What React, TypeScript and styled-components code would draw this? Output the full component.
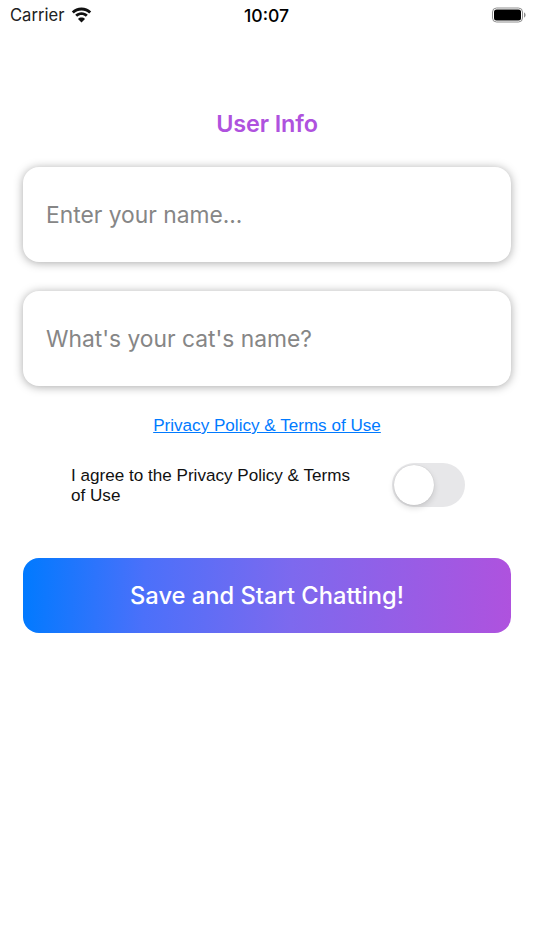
import React from 'react';
import styled, { createGlobalStyle } from 'styled-components';

const GlobalStyle = createGlobalStyle`
  html, body {
    margin: 0;
    padding: 0;
    background: #ffffff;
  }
  * {
    box-sizing: border-box;
  }
`;

const Screen = styled.div`
  width: 534px;
  height: 950px;
  overflow: hidden;
  background: #ffffff;
  font-family: Inter, "Liberation Sans", sans-serif;
`;

const StatusBar = styled.div`
  height: 30px;
  padding: 0 8px 0 10px;
  display: grid;
  grid-template-columns: 1fr auto 1fr;
  align-items: center;
  color: #000000;
`;

const StatusLeft = styled.div`
  display: flex;
  align-items: center;
  gap: 7px;
  font-size: 16.6px;
  color: #222222;
`;

const StatusTime = styled.div`
  margin-right: 3px;
  font-size: 17.6px;
  font-weight: 500;
`;

const StatusRight = styled.div`
  display: flex;
  justify-content: flex-end;
`;

const Content = styled.div`
  padding: 78px 23px 0;
  display: flex;
  flex-direction: column;
`;

const Title = styled.h1`
  margin: 0 0 27px;
  height: 32px;
  line-height: 32px;
  text-align: center;
  font-size: 23.4px;
  font-weight: 600;
  letter-spacing: -0.1px;
  color: #af52de;
`;

const FieldList = styled.div`
  display: flex;
  flex-direction: column;
  gap: 29px;
`;

const Field = styled.input`
  display: block;
  width: 100%;
  height: 95px;
  padding: 0 23px;
  border: none;
  outline: none;
  border-radius: 16px;
  background: #ffffff;
  box-shadow: 0 1px 10px rgba(0, 0, 0, 0.34);
  font-family: Inter, sans-serif;
  font-size: 22.8px;
  color: #000000;

  &::placeholder {
    color: #868686;
    opacity: 1;
  }
`;

const PolicyLink = styled.a`
  align-self: center;
  margin-top: 29px;
  font-family: "Liberation Sans", sans-serif;
  font-size: 17.1px;
  line-height: 22px;
  color: #007aff;
  text-decoration: underline;
`;

const AgreeRow = styled.div`
  margin-top: 26px;
  padding: 0 46px 0 48px;
  display: flex;
  align-items: center;
  justify-content: space-between;
`;

const AgreeText = styled.div`
  width: 290px;
  padding-top: 2px;
  font-family: "Liberation Sans", sans-serif;
  font-size: 17.1px;
  line-height: 20px;
  color: #111111;
`;

const Toggle = styled.div`
  width: 73px;
  height: 44px;
  padding: 2px;
  border-radius: 22px;
  background: #e7e7e9;
`;

const ToggleKnob = styled.div`
  width: 40px;
  height: 40px;
  border-radius: 50%;
  background: #ffffff;
  box-shadow: 0 3px 6px rgba(0, 0, 0, 0.14), 0 0 1px rgba(0, 0, 0, 0.2);
`;

const SaveButton = styled.button`
  margin-top: 51px;
  height: 75px;
  width: 100%;
  border: none;
  border-radius: 16px;
  background: linear-gradient(92deg, #007aff 0%, #4b70fa 25%, #7d69ee 55%, #af52de 100%);
  font-family: Inter, sans-serif;
  font-size: 23.7px;
  font-weight: 550;
  color: #ffffff;
`;

const WifiIcon = () => (
  <svg width="21" height="16" viewBox="0 0 21 16" fill="#111111">
    <path d="M10.5 3.4c3 0 5.7 1.1 7.7 3.1l2-2C17.6 2 14.2.5 10.5.5S3.4 2 .8 4.5l2 2c2-2 4.7-3.1 7.7-3.1z" />
    <path d="M10.5 8.1c1.7 0 3.2.6 4.3 1.7l2-2.1c-1.6-1.6-3.9-2.5-6.3-2.5s-4.7.9-6.3 2.5l2 2.1c1.1-1.1 2.6-1.7 4.3-1.7z" />
    <path d="M10.5 15.5l3.5-3.6c-.9-.9-2.1-1.4-3.5-1.4s-2.6.5-3.5 1.4z" />
  </svg>
);

const BatteryIcon = () => (
  <svg width="34" height="16" viewBox="0 0 34 16">
    <rect x="0.5" y="1" width="30" height="14" rx="4" fill="none" stroke="#8e8e8e" />
    <rect x="2" y="2.5" width="27" height="11" rx="2.5" fill="#000000" />
    <path d="M32 5.5c1 .3 1.6 1.3 1.6 2.5s-.6 2.2-1.6 2.5z" fill="#8e8e8e" />
  </svg>
);

export default function App() {
  return (
    <Screen>
      <GlobalStyle />
      <StatusBar>
        <StatusLeft>
          Carrier
          <WifiIcon />
        </StatusLeft>
        <StatusTime>10:07</StatusTime>
        <StatusRight>
          <BatteryIcon />
        </StatusRight>
      </StatusBar>
      <Content>
        <Title>User Info</Title>
        <FieldList>
          <Field placeholder="Enter your name..." />
          <Field placeholder="What's your cat's name?" />
        </FieldList>
        <PolicyLink href="#">Privacy Policy &amp; Terms of Use</PolicyLink>
        <AgreeRow>
          <AgreeText>I agree to the Privacy Policy &amp; Terms of Use</AgreeText>
          <Toggle>
            <ToggleKnob />
          </Toggle>
        </AgreeRow>
        <SaveButton>Save and Start Chatting!</SaveButton>
      </Content>
    </Screen>
  );
}
